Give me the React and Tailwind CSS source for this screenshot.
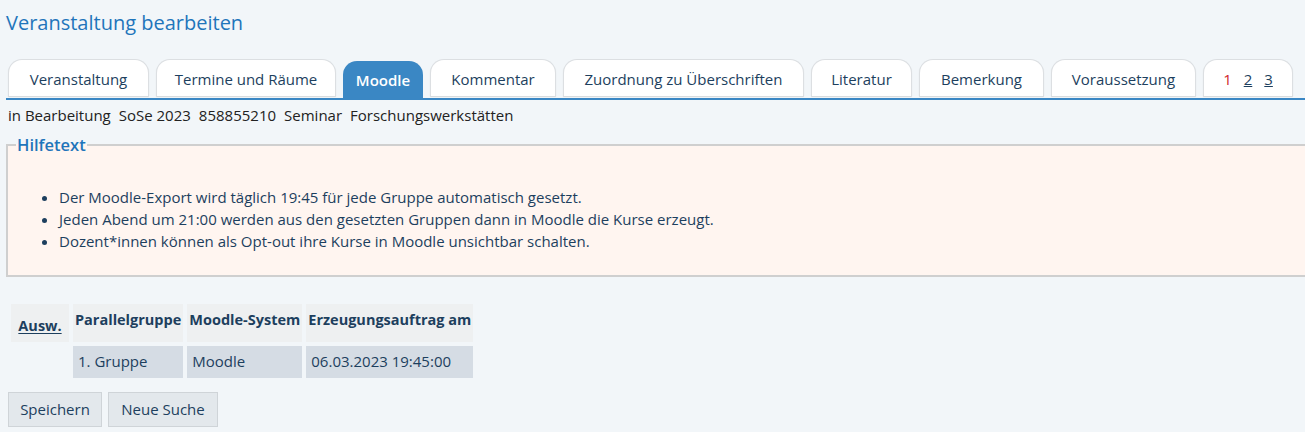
import React from 'react';

const tabs = [
  { label: 'Veranstaltung', w: 'w-[141px]' },
  { label: 'Termine und Räume', w: 'w-[180px]' },
  { label: 'Moodle', w: 'w-[80px]', active: true },
  { label: 'Kommentar', w: 'w-[126px]' },
  { label: 'Zuordnung zu Überschriften', w: 'w-[241px]' },
  { label: 'Literatur', w: 'w-[101px]' },
  { label: 'Bemerkung', w: 'w-[125px]' },
  { label: 'Voraussetzung', w: 'w-[145px]' },
];

const hints = [
  'Der Moodle-Export wird täglich 19:45 für jede Gruppe automatisch gesetzt.',
  'Jeden Abend um 21:00 werden aus den gesetzten Gruppen dann in Moodle die Kurse erzeugt.',
  'Dozent*innen können als Opt-out ihre Kurse in Moodle unsichtbar schalten.',
];

export default function App() {
  return (
    <div className="min-h-[432px] bg-[#f2f6f9] text-[15px] text-[#1d3f5e]" style={{ fontFamily: '"Open Sans", "Noto Sans", sans-serif' }}>
      <h1 className="px-[6px] pt-[10px] text-[20px] leading-[26px] text-[#1f75bb]">Veranstaltung bearbeiten</h1>

      <div className="ml-[6px] mt-[23px] flex items-end gap-[7px] border-b-2 border-[#3a87c4] pl-[2px]">
        {tabs.map(t =>
          t.active ? (
            <div key={t.label} className={`${t.w} -mb-[1px] flex h-[38px] items-center justify-center rounded-t-[14px] bg-[#3a87c4] font-semibold text-white`}>
              {t.label}
            </div>
          ) : (
            <div key={t.label} className={`${t.w} mb-[2px] flex h-[37px] items-center justify-center rounded-t-[14px] border border-b-0 border-[#dcdfe2] bg-white pt-[2px] shadow-[0_1px_1px_rgba(0,0,0,0.12)]`}>
              {t.label}
            </div>
          )
        )}
        <div className="mb-[2px] flex h-[37px] w-[90px] items-center justify-center gap-[12px] rounded-t-[14px] border border-b-0 border-[#dcdfe2] bg-white pt-[2px] shadow-[0_1px_1px_rgba(0,0,0,0.12)]">
          <span className="text-[#d0262b]">1</span>
          <span className="underline">2</span>
          <span className="underline">3</span>
        </div>
      </div>

      <div className="flex gap-[8px] px-[8px] pt-[4px] text-[#222]">
        <span>in Bearbeitung</span>
        <span>SoSe 2023</span>
        <span>858855210</span>
        <span>Seminar</span>
        <span>Forschungswerkstätten</span>
      </div>

      <fieldset className="ml-[6px] mt-[6px] h-[144px] border-2 border-r-0 border-[#cfcfcf] bg-[#fff5f0] pl-[8px]">
        <legend className="px-[1px] text-[16.5px] font-semibold text-[#1f75bb]">Hilfetext</legend>
        <ul className="mt-[29px] list-disc pl-[43px] leading-[22px]">
          {hints.map(h => <li key={h}>{h}</li>)}
        </ul>
      </fieldset>

      <table className="ml-[7px] mt-[23px] border-separate border-spacing-[4px]">
        <thead>
          <tr className="text-[14.5px] font-semibold">
            <th className="h-[38px] w-[58px] bg-[#eef0f1] pt-[6px] text-center">
              <span className="underline decoration-1 underline-offset-2">Ausw.</span>
            </th>
            <th className="h-[38px] bg-[#eef0f1] px-[2px] pb-[6px] text-left">Parallelgruppe</th>
            <th className="h-[38px] bg-[#eef0f1] px-[2px] pb-[6px] text-left">Moodle-System</th>
            <th className="h-[38px] bg-[#eef0f1] px-[2px] pb-[6px] text-left">Erzeugungsauftrag am</th>
          </tr>
        </thead>
        <tbody>
          <tr>
            <td></td>
            <td className="h-[32px] bg-[#d5dce4] px-[5px]">1. Gruppe</td>
            <td className="h-[32px] bg-[#d5dce4] px-[5px]">Moodle</td>
            <td className="h-[32px] bg-[#d5dce4] px-[5px]">06.03.2023 19:45:00</td>
          </tr>
        </tbody>
      </table>

      <div className="ml-[8px] mt-[10px] flex gap-[6px]">
        <button className="h-[35px] w-[94px] border border-[#cfd4d8] bg-[#e3e8ec] text-[#1d3f5e]">Speichern</button>
        <button className="h-[35px] w-[110px] border border-[#cfd4d8] bg-[#e3e8ec] text-[#1d3f5e]">Neue Suche</button>
      </div>
    </div>
  );
}
